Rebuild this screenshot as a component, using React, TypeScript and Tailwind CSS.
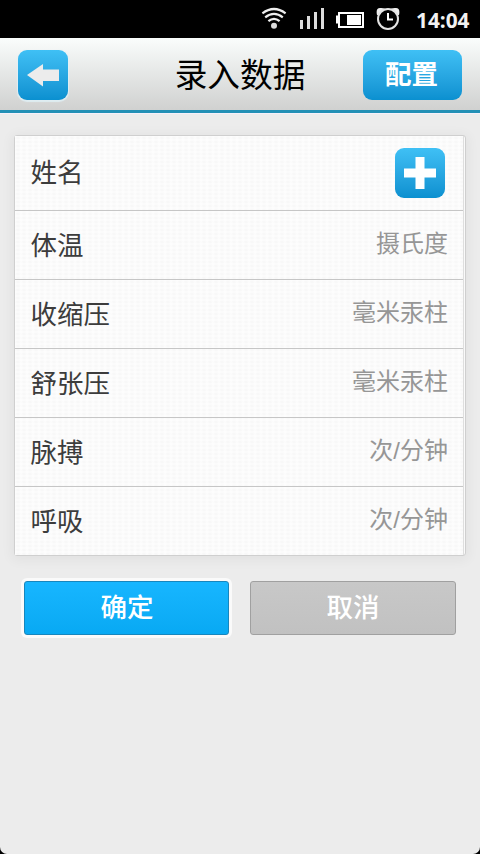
import { useState } from "react";
import clsx from "clsx";

interface Field {
  id: string;
  label: string;
  unit?: string;
}

const FIELDS: Field[] = [
  { id: "name", label: "姓名" },
  { id: "temperature", label: "体温", unit: "摄氏度" },
  { id: "systolic", label: "收缩压", unit: "毫米汞柱" },
  { id: "diastolic", label: "舒张压", unit: "毫米汞柱" },
  { id: "pulse", label: "脉搏", unit: "次/分钟" },
  { id: "breath", label: "呼吸", unit: "次/分钟" },
];

const iconButtonClass =
  "flex h-[50px] items-center justify-center bg-linear-to-b from-[#3fc0f5] to-[#0a90d0]";

function StatusBar() {
  return (
    <div className="flex h-[38px] shrink-0 items-center bg-black pl-[260px]">
      <svg width="28" height="38" viewBox="0 0 28 38" fill="none" stroke="#eee" strokeWidth="2.2">
        <path d="M2.4 13.4Q14 4.6 25.6 13.4" />
        <path d="M5.2 17.4Q14 10.4 22.8 17.4" />
        <path d="M8.4 21.2Q14 16.4 19.6 21.2" />
        <circle cx="14" cy="25.8" r="3" fill="#ddd" stroke="none" />
      </svg>
      <svg className="ml-3" width="26" height="38" viewBox="0 0 26 38" fill="#ddd">
        <rect x="0" y="20" width="3" height="9" />
        <rect x="7" y="16" width="3" height="13" />
        <rect x="14" y="12" width="3" height="17" />
        <rect x="21" y="8" width="3" height="21" />
      </svg>
      <svg className="ml-[10px]" width="28" height="38" viewBox="0 0 28 38">
        <rect x="0" y="15.5" width="3" height="8" fill="#fff" />
        <rect x="3" y="13" width="24" height="14" fill="none" stroke="#fff" strokeWidth="2" />
        <rect x="11" y="15" width="14" height="10" fill="#fff" />
      </svg>
      <svg className="ml-3" width="24" height="38" viewBox="0 0 24 38" fill="none">
        <path d="M1 15Q-.5 8.3 4 8Q9 7.6 10 10L4 15Z" fill="#eee" />
        <path d="M23 15Q24.5 8.3 20 8Q15 7.6 14 10L20 15Z" fill="#eee" />
        <circle cx="12" cy="19" r="10" fill="#000" stroke="#e4e4e4" strokeWidth="2" />
        <path d="M12 13V19.5H17" stroke="#fff" strokeWidth="2" />
      </svg>
      <span className="ml-4 mt-[2px] text-[20.8px] leading-none font-bold text-[#f2f2f2] font-['Open_Sans',sans-serif]">
        14:04
      </span>
    </div>
  );
}

function Header() {
  return (
    <header className="grid h-[75px] shrink-0 grid-cols-[1fr_auto_1fr] items-center border-b-[3px] border-[#2390b5] bg-linear-to-b from-[#fafdfc] to-[#d0d1d0] px-[18px] pb-px pt-[3px] shadow-[0_1px_0_#f6f0fa]">
      <button className={clsx(iconButtonClass, "w-[50px] rounded-[9px] shadow-[0_1px_1px_1px_rgba(225,243,249,0.8)]")}>
        <svg width="34" height="24" viewBox="0 0 34 24" fill="#ececec">
          <path d="M1 12 17 1V6.5H33V18H17V23.5Z" />
        </svg>
      </button>
      <h1 className="pt-[3px] text-[32.7px] leading-none text-black">录入数据</h1>
      <button
        className={clsx(
          iconButtonClass,
          "w-[99px] justify-self-end rounded-[9px] pr-[2px] pt-px text-[26.5px] leading-none font-bold text-white",
        )}
      >
        配置
      </button>
    </header>
  );
}

function FieldRow({ field }: { field: Field }) {
  return (
    <div
      className={clsx(
        "flex items-center justify-between border-b border-[#c6c6c6] pl-[15.5px] last:border-b-0",
        field.unit ? "h-[69px] pr-[15px] last:h-[68px]" : "h-[75px] pr-[18px]",
      )}
    >
      <span className={clsx("text-[26.5px] leading-none text-[#3c3c3c]", field.unit && "pt-[2px]")}>{field.label}</span>
      {field.unit ? (
        <span className="mb-[3px] text-[24px] leading-none text-[#969696]">{field.unit}</span>
      ) : (
        <button className={clsx(iconButtonClass, "w-[50px] rounded-[9px]")}>
          <svg width="34" height="34" viewBox="0 0 34 34" fill="#fff">
            <path d="M12.5 1H21.5V12.5H33V21.5H21.5V33H12.5V21.5H1V12.5H12.5Z" />
          </svg>
        </button>
      )}
    </div>
  );
}

export default function App() {
  const [fields] = useState(FIELDS);

  return (
    <div className="h-[854px] w-[480px] bg-black font-['Liberation_Sans','Noto_Sans_CJK_SC',sans-serif]">
      <div className="flex h-full flex-col overflow-hidden rounded-b-[7px] bg-[#ececec]">
        <StatusBar />
        <Header />
        <main className="px-[14px] pt-[22px]">
          <section className="rounded-[3px] border border-[#cfcfcf] bg-[#fafafa] pr-px shadow-[0_2px_12px_3px_rgba(0,0,0,0.045)]">
            {/* faint woven texture under the rows */}
            <div className="border-r border-[#dedede] bg-[radial-gradient(ellipse_at_center,#f8f8f8_25%,#fdfdfd_75%)] bg-size-[6px_4px]">
              {fields.map((f) => (
                <FieldRow key={f.id} field={f} />
              ))}
            </div>
          </section>
          <div className="mt-[25px] flex gap-[21px] pl-[10px]">
            <button className="h-[54px] w-[205px] rounded-[3px] border border-[#1786bd] bg-linear-to-b from-[#17b6ff] to-[#08a9f3] pl-px pt-px text-[26.5px] leading-none font-medium text-white shadow-[0_0_0_3px_#fafafa]">
              确定
            </button>
            <button className="h-[54px] w-[206px] rounded-[3px] border border-[#a0a0a0] bg-linear-to-b from-[#c8c8c8] to-[#c1c1c1] pt-px text-[26.5px] leading-none font-medium text-white">
              取消
            </button>
          </div>
        </main>
      </div>
    </div>
  );
}
